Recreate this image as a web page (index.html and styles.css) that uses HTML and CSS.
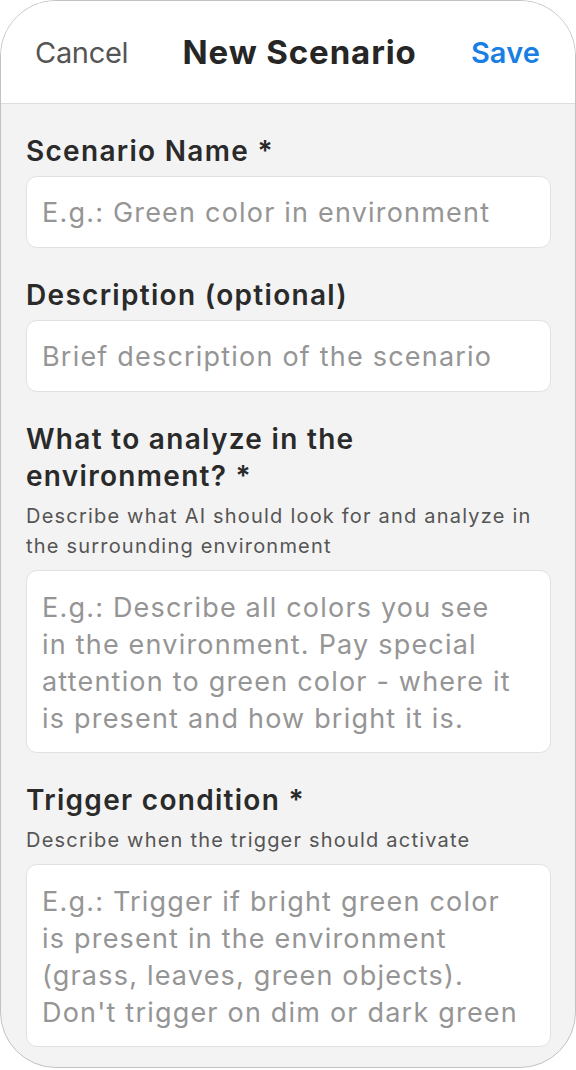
FILE: index.html
```html
<!DOCTYPE html>
<html lang="en">
<head>
<meta charset="utf-8">
<title>New Scenario</title>
<link rel="stylesheet" href="styles.css">
</head>
<body>
<div class="phone">
  <header class="topbar">
    <span class="btn-cancel">Cancel</span>
    <h1 class="title">New Scenario</h1>
    <span class="btn-save">Save</span>
  </header>
  <main class="form">
    <section class="field">
      <label class="label">Scenario Name *</label>
      <div class="input"><span class="ph">E.g.: Green color in environment</span></div>
    </section>
    <section class="field">
      <label class="label">Description (optional)</label>
      <div class="input"><span class="ph">Brief description of the scenario</span></div>
    </section>
    <section class="field">
      <label class="label">What to analyze in the<br>environment? *</label>
      <p class="help">Describe what AI should look for and analyze in<br>the surrounding environment</p>
      <div class="textarea"><span class="ph">E.g.: Describe all colors you see<br>in the environment. Pay special<br>attention to green color - where it<br>is present and how bright it is.</span></div>
    </section>
    <section class="field">
      <label class="label">Trigger condition *</label>
      <p class="help">Describe when the trigger should activate</p>
      <div class="textarea"><span class="ph">E.g.: Trigger if bright green color<br>is present in the environment<br>(grass, leaves, green objects).<br>Don't trigger on dim or dark green</span></div>
    </section>
  </main>
</div>
</body>
</html>
```

FILE: styles.css
```css
* { box-sizing: border-box; }
html, body { margin: 0; padding: 0; background: #ffffff; }
body { font-family: "Inter", "Open Sans", sans-serif; }

.phone {
  width: 576px;
  height: 1068px;
  border: 1px solid #c2c2c2;
  border-radius: 56px;
  overflow: hidden;
  background: #f3f3f3;
  display: flex;
  flex-direction: column;
}

.topbar {
  height: 103px;
  flex: 0 0 auto;
  background: #ffffff;
  border-bottom: 1px solid #dedede;
  display: flex;
  align-items: center;
  justify-content: space-between;
  padding: 0 35px 0 34px;
}
.btn-cancel { font-size: 29px; color: #555555; font-weight: 400; letter-spacing: -0.3px; }
.title { margin: 0; font-size: 33px; font-weight: 700; color: #262626; letter-spacing: 0.9px; }
.btn-save { font-size: 29px; color: #1a7fe3; font-weight: 600; letter-spacing: 0.1px; }

.form {
  padding: 29px 24px 0 25px;
  display: flex;
  flex-direction: column;
  gap: 29px;
}
.field { display: flex; flex-direction: column; }
.label {
  font-size: 28px;
  line-height: 37px;
  font-weight: 600;
  color: #2a2a2a;
  letter-spacing: 1.3px;
}
.help {
  margin: 6px 0 0;
  font-size: 20px;
  line-height: 30px;
  color: #555555;
  letter-spacing: 1.2px;
}
.input, .textarea {
  margin-top: 6px;
  background: #ffffff;
  border: 1px solid #e1e1e1;
  border-radius: 11px;
  padding: 0 15px;
}
.input {
  height: 72px;
  display: flex;
  align-items: center;
}
.help + .textarea { margin-top: 9px; }
.textarea {
  height: 183px;
  padding-top: 18px;
  overflow: hidden;
}
.ph {
  font-size: 27px;
  line-height: 37px;
  color: #959595;
  letter-spacing: 1.2px;
}
```
